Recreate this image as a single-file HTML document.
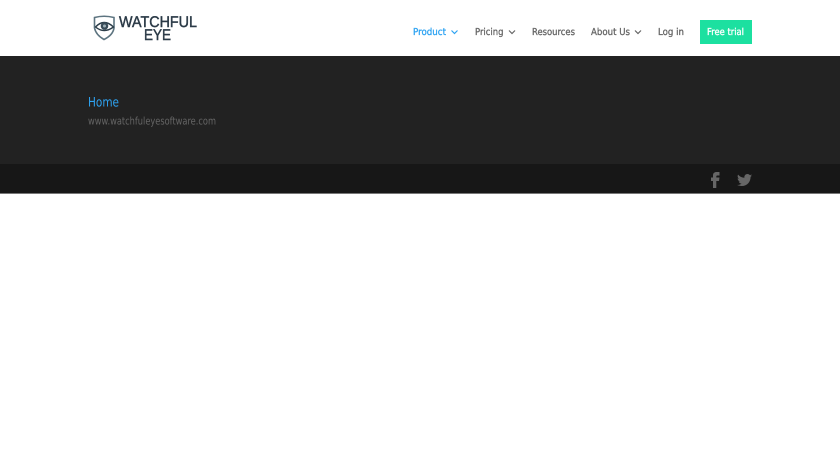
<!DOCTYPE html>
<html><head><meta charset="utf-8"><style>
html,body{margin:0;padding:0;background:#fff;width:840px;height:472px;overflow:hidden}
body{position:relative}
.a{position:absolute}
text{font-family:"DejaVu Sans","Liberation Sans",sans-serif;text-rendering:geometricPrecision}
.n{font-size:9.5px;fill:#666;stroke:#666;stroke-width:.3px}
.l{font-family:"Liberation Sans",sans-serif;font-weight:400;font-size:15.5px;fill:#2b3a47;stroke:#2b3a47;stroke-width:.45px}
</style></head><body>
<div class="a" style="left:0;top:0;width:840px;height:56px;background:#fff"></div>
<div class="a" style="left:0;top:56px;width:840px;height:108px;background:#222"></div>
<div class="a" style="left:0;top:164px;width:840px;height:29px;background:#171717"></div>
<div class="a" style="left:0;top:193px;width:840px;height:1px;background:#777"></div>
<div class="a" style="left:700px;top:20px;width:52px;height:24px;background:#1ce0a0"></div>
<svg class="a" style="left:0;top:0" width="840" height="200" viewBox="0 0 840 200">
<g transform="translate(93,15)">
<path d="M1.500 2.500 Q11 0 21 2.500 V13 Q20 20 11 24.500 Q3 20 1.500 13Z" fill="none" stroke="#5d7480" stroke-width="1.600"/>
<path d="M2.500 12 Q11 3 20.500 12 Q11 19 2.500 12Z" fill="none" stroke="#2c3e4a" stroke-width="1.400"/>
<circle cx="11.500" cy="11" r="3.800" fill="#3a4c58"/><circle cx="11.500" cy="11" r="1.500" fill="#9fb0b8"/>
</g>
<text class="l" x="119" y="27" textLength="78" lengthAdjust="spacingAndGlyphs">WATCHFUL</text>
<text class="l" x="144" y="40" textLength="27" lengthAdjust="spacingAndGlyphs">EYE</text>
<text class="n" x="413" y="35" textLength="33" lengthAdjust="spacingAndGlyphs" style="fill:#2ea3f2;stroke:#2ea3f2">Product</text>
<path d="M451.500 30.500 L454.500 33.500 L457.500 30.500" fill="none" stroke="#2ea3f2" stroke-width="1.200"/>
<text class="n" x="475" y="35" textLength="28.500" lengthAdjust="spacingAndGlyphs">Pricing</text>
<path d="M509 30.500 L512 33.500 L515 30.500" fill="none" stroke="#666" stroke-width="1.200"/>
<text class="n" x="532" y="35" textLength="43" lengthAdjust="spacingAndGlyphs">Resources</text>
<text class="n" x="591" y="35" textLength="39" lengthAdjust="spacingAndGlyphs">About Us</text>
<path d="M635 30.500 L638 33.500 L641 30.500" fill="none" stroke="#666" stroke-width="1.200"/>
<text class="n" x="658" y="35" textLength="26" lengthAdjust="spacingAndGlyphs">Log in</text>
<text class="n" x="707" y="35" textLength="37" lengthAdjust="spacingAndGlyphs" style="fill:#fff;stroke:#fff">Free trial</text>
<text x="88" y="106.500" font-size="13" fill="#2ea3f2" textLength="31" lengthAdjust="spacingAndGlyphs">Home</text>
<text x="88" y="124.500" font-size="10.500" fill="#666" textLength="128" lengthAdjust="spacingAndGlyphs">www.watchfuleyesoftware.com</text>
<path d="M713 188 V181 H711 V177.500 H713 V175.500 C713 173 714.500 172 716.500 172 H719.500 V175.500 H717.500 C716.700 175.500 716.300 175.800 716.300 176.700 V177.500 H719.500 L719 181 H716.300 V188Z" fill="#666"/>
<g transform="translate(737,174) scale(.63)"><path d="M24 2.400c-.9.400-1.800.700-2.800.800 1-.600 1.800-1.600 2.200-2.700-1 .600-2 1-3.100 1.200C19.300.700 18 0 16.600 0c-2.700 0-4.900 2.200-4.900 4.900 0 .400 0 .800.100 1.100C7.700 5.800 4.100 3.900 1.700.900c-.400.700-.700 1.600-.7 2.500 0 1.700.900 3.200 2.200 4.100-.800 0-1.600-.200-2.200-.600v.100c0 2.400 1.700 4.400 3.900 4.800-.400.100-.800.200-1.300.200-.300 0-.600 0-.900-.100.600 2 2.400 3.400 4.600 3.400-1.700 1.300-3.800 2.100-6.100 2.100-.400 0-.800 0-1.200-.100C2.200 18.300 4.800 19.100 7.500 19.100c9.100 0 14-7.500 14-14v-.600c1-.700 1.800-1.500 2.500-2.100z" fill="#666"/></g>
</svg>
</body></html>
